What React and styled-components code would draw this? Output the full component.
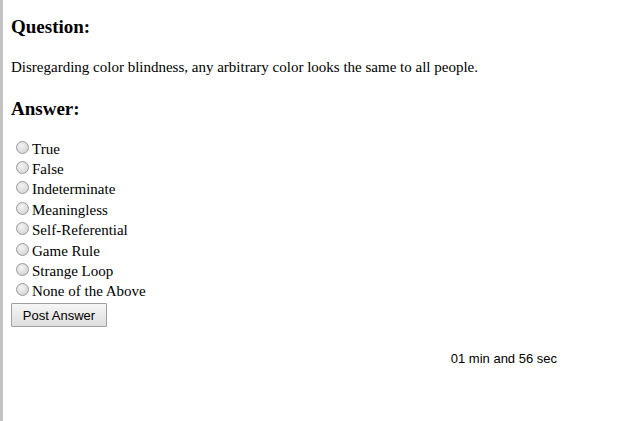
import React, { useState } from "react";
import styled, { createGlobalStyle } from "styled-components";

const GlobalStyle = createGlobalStyle`
	html, body {
		margin: 0;
		padding: 0;
		background: #fff;
	}
	body {
		font-family: "Liberation Serif", "Times New Roman", serif;
		color: #000;
	}
`;

const choices = [
	"True",
	"False",
	"Indeterminate",
	"Meaningless",
	"Self-Referential",
	"Game Rule",
	"Strange Loop",
	"None of the Above",
];

const App = () => {
	const [picked, setPicked] = useState(null);

	return (
		<>
			<GlobalStyle />
			<Page>
				<Heading>Question:</Heading>
				<QuestionText>
					Disregarding color blindness, any arbitrary color looks the same to
					all people.
				</QuestionText>
				<Heading $gap={22}>Answer:</Heading>
				<ChoiceList>
					{choices.map((choice, i) => (
						<Choice key={i}>
							<Radio
								type="radio"
								name="answer"
								checked={picked === i}
								onChange={() => setPicked(i)}
							/>
							{choice}
						</Choice>
					))}
				</ChoiceList>
				<PostButton type="button">Post Answer</PostButton>
				<Timer>01 min and 56 sec</Timer>
			</Page>
		</>
	);
};

export default App;

const Page = styled.div`
	min-height: 100vh;
	box-sizing: border-box;
	border-left: 3px solid #c3c3c3;
	padding: 1px 0 0 8px;
`;

const Heading = styled.h3`
	font-size: 19px;
	font-weight: bold;
	margin: ${(p) => p.$gap || 15}px 0 0;
	line-height: 22px;
`;

const QuestionText = styled.p`
	font-size: 15px;
	line-height: 17px;
	margin: 21px 0 0;
`;

const ChoiceList = styled.div`
	display: flex;
	flex-direction: column;
	margin-top: 19px;
`;

const Choice = styled.label`
	display: flex;
	align-items: center;
	height: 20.4px;
	font-size: 15px;
	cursor: pointer;
`;

const Radio = styled.input`
	appearance: none;
	width: 13px;
	height: 13px;
	margin: 0 3px 0 5px;
	border-radius: 50%;
	border: 1px solid #9a9a9a;
	background: radial-gradient(circle at 40% 35%, #f4f4f4 0%, #dcdcdc 60%, #cfcfcf 100%);
	box-sizing: border-box;
	position: relative;
	top: -2px;

	&:checked::after {
		content: "";
		position: absolute;
		left: 3px;
		top: 3px;
		width: 5px;
		height: 5px;
		border-radius: 50%;
		background: #333;
	}
`;

const PostButton = styled.button`
	width: 96px;
	height: 24px;
	margin-top: 1px;
	font-family: "Liberation Sans", Arial, sans-serif;
	font-size: 13px;
	color: #000;
	border: 1px solid #a0a0a0;
	border-radius: 1px;
	background: linear-gradient(#f6f6f6, #dedede);
	padding: 0;
`;

const Timer = styled.div`
	width: 546px;
	text-align: right;
	margin-top: 24px;
	font-family: "Liberation Sans", Arial, sans-serif;
	font-size: 13px;
`;
